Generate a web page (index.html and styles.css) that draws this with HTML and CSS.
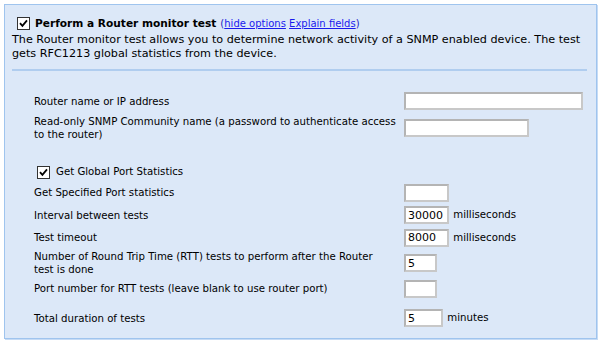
FILE: index.html
```html
<!DOCTYPE html>
<html lang="en">
<head>
    <meta charset="UTF-8">
    <title>Router monitor test</title>
    <link rel="stylesheet" href="styles.css">
</head>
<body>
    <div class="panel">
        <!-- Header -->
        <div class="test-head">
            <span class="check"><svg width="9" height="9" viewBox="0 0 9 9"><path d="M1 4.2 L3.4 6.8 L8 1.4" fill="none" stroke="#000" stroke-width="1.8"/></svg></span>
            <span class="test-title">Perform a Router monitor test</span>
            <span class="opts">(<a href="#">hide options</a> <a href="#">Explain fields</a>)</span>
        </div>
        <p class="desc">The Router monitor test allows you to determine network activity of a SNMP enabled device. The test gets RFC1213 global statistics from the device.</p>
        <div class="rule"></div>

        <table class="fields">
            <tr>
                <td class="lbl">Router name or IP address</td>
                <td><input type="text" class="w-179"></td>
            </tr>
            <tr>
                <td class="lbl">Read-only SNMP Community name (a password to authenticate access to the router)</td>
                <td><input type="text" class="w-125"></td>
            </tr>
            <tr class="gap"><td colspan="2"></td></tr>
            <tr>
                <td class="lbl" colspan="2"><span class="check small"><svg width="9" height="9" viewBox="0 0 9 9"><path d="M1 4.2 L3.4 6.8 L8 1.4" fill="none" stroke="#000" stroke-width="1.8"/></svg></span>Get Global Port Statistics</td>
            </tr>
            <tr>
                <td class="lbl">Get Specified Port statistics</td>
                <td><input type="text" class="w-45"></td>
            </tr>
            <tr>
                <td class="lbl">Interval between tests</td>
                <td><input type="text" class="w-45" value="30000"> <span class="unit">milliseconds</span></td>
            </tr>
            <tr>
                <td class="lbl">Test timeout</td>
                <td><input type="text" class="w-45" value="8000"> <span class="unit">milliseconds</span></td>
            </tr>
            <tr class="tight">
                <td class="lbl">Number of Round Trip Time (RTT) tests to perform after the Router<br>test is done</td>
                <td><input type="text" class="w-33" value="5"></td>
            </tr>
            <tr>
                <td class="lbl">Port number for RTT tests (leave blank to use router port)</td>
                <td><input type="text" class="w-33"></td>
            </tr>
            <tr class="gap small-gap"><td colspan="2"></td></tr>
            <tr>
                <td class="lbl">Total duration of tests</td>
                <td><input type="text" class="w-39" value="5"> <span class="unit">minutes</span></td>
            </tr>
        </table>
    </div>
</body>
</html>
```

FILE: styles.css
```css
body {
    margin: 0;
    background: #fff;
    font-family: "DejaVu Sans", Verdana, sans-serif;
    color: #000;
}
.panel {
    margin: 4px;
    width: 576px;
    height: 323px;
    padding: 10px 8px 0 7px;
    background: #dce8f8;
    border: 1px solid #9fc4ee;
    box-shadow: 1px 1px 0 #c6dbf5;
}
.test-head {
    display: flex;
    align-items: center;
    padding-left: 5px;
    height: 16px;
}
.check {
    display: inline-flex;
    align-items: center;
    justify-content: center;
    width: 11px;
    height: 11px;
    border: 1px solid #333;
    background: #fff;
    margin-right: 5px;
}
.test-title {
    font-weight: bold;
    font-size: 10.6px;
    margin-right: 4px;
}
.opts {
    font-size: 10px;
    color: #2020c0;
}
.opts a {
    color: #1a1aee;
}
.desc {
    margin: 2px 0 0;
    font-size: 11.2px;
    line-height: 14px;
}
.rule {
    margin-top: 8px;
    border-top: 2px solid #b0cdef;
    margin-right: 1px;
}
.fields {
    border-collapse: collapse;
    margin: 19px 0 0 22px;
    font-size: 10.2px;
}
.fields td {
    padding: 2px 0 2.5px;
    vertical-align: middle;
    line-height: 13px;
}
.fields td.lbl {
    width: 370px;
}
.fields tr.tight td {
    padding: 1px 0 1.5px;
}
.fields .gap td {
    height: 20px;
    padding: 0;
}
.fields .small-gap td {
    height: 7px;
}
.check.small {
    margin: 0 6px 0 3px;
    vertical-align: -2px;
}
input {
    box-sizing: border-box;
    height: 18px;
    border: 2px solid #c8c8c8;
    border-top-color: #b4b4b4;
    border-left-color: #b4b4b4;
    background: #fff;
    font-family: "DejaVu Sans", Verdana, sans-serif;
    font-size: 11px;
    padding: 0 2px;
    margin: 0;
    vertical-align: middle;
}
.w-179 { width: 179px; }
.w-125 { width: 125px; }
.w-45 { width: 45px; }
.w-39 { width: 39px; }
.w-33 { width: 33px; }
.unit {
    margin-left: 1px;
}
```
